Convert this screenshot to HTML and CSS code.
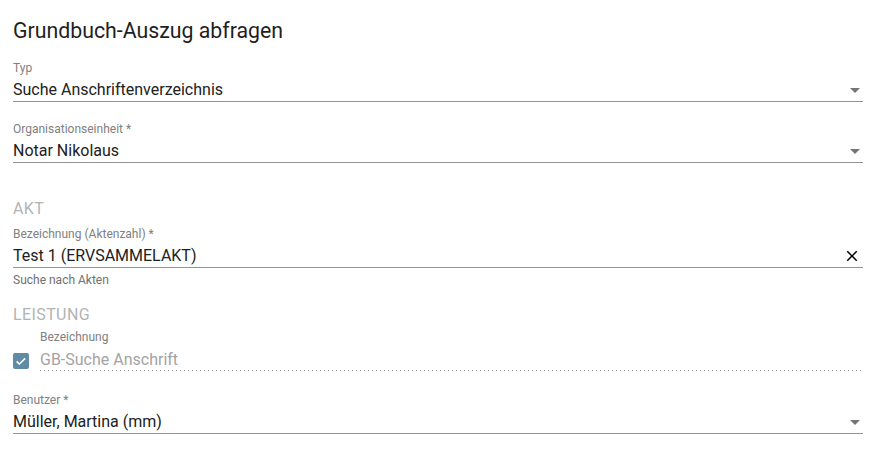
FILE: index.html
```html
<!DOCTYPE html>
<html lang="de">
<head>
<meta charset="utf-8">
<title>Grundbuch-Auszug abfragen</title>
<link rel="stylesheet" href="styles.css">
</head>
<body>
<div class="page">
  <h1 class="title">Grundbuch-Auszug abfragen</h1>

  <div class="field field-first">
    <div class="label">Typ</div>
    <div class="control">
      <span class="value">Suche Anschriftenverzeichnis</span>
      <span class="arrow"></span>
    </div>
  </div>

  <div class="field">
    <div class="label">Organisationseinheit *</div>
    <div class="control">
      <span class="value">Notar Nikolaus</span>
      <span class="arrow"></span>
    </div>
  </div>

  <div class="section section-akt">AKT</div>

  <div class="field field-akt">
    <div class="label">Bezeichnung (Aktenzahl) *</div>
    <div class="control">
      <span class="value">Test 1 (ERVSAMMELAKT)</span>
      <svg class="clear" viewBox="0 0 24 24" width="18" height="18"><path d="M19 6.41L17.59 5 12 10.59 6.41 5 5 6.41 10.59 12 5 17.59 6.41 19 12 13.41 17.59 19 19 17.59 13.41 12z" fill="#000"/></svg>
    </div>
  </div>
  <div class="hint">Suche nach Akten</div>

  <div class="section section-leistung">LEISTUNG</div>

  <div class="leistung-row">
    <span class="checkbox">
      <svg viewBox="0 0 16 16" width="16" height="16"><path d="M3.6 8.3 L6.4 11 L12.2 5.4" fill="none" stroke="#fff" stroke-width="1.6"/></svg>
    </span>
    <div class="leistung-col">
      <div class="label">Bezeichnung</div>
      <div class="disabled-value">GB-Suche Anschrift</div>
    </div>
  </div>

  <div class="field field-user">
    <div class="label">Benutzer *</div>
    <div class="control">
      <span class="value">Müller, Martina (mm)</span>
      <span class="arrow"></span>
    </div>
  </div>
</div>
</body>
</html>
```

FILE: styles.css
```css
html, body {
  margin: 0;
  padding: 0;
  background: #ffffff;
}

body {
  font-family: Roboto, "Liberation Sans", Arial, sans-serif;
  color: #212121;
}

.page {
  padding: 0 18px 0 13px;
}

.title {
  margin: 19px 0 0;
  font-size: 21.3px;
  line-height: 24px;
  font-weight: 400;
  color: #1f1f1f;
}

.field {
  margin-top: 19px;
}

.field-first {
  margin-top: 17px;
}

.field-akt {
  margin-top: 5px;
}

.field-user {
  margin-top: 21px;
}

.label {
  font-size: 12px;
  line-height: 16px;
  color: #808080;
}

.control {
  display: flex;
  align-items: center;
  height: 20px;
  padding-top: 4px;
  padding-bottom: 1px;
  border-bottom: 1px solid #949494;
}

.value {
  flex: 1;
  font-size: 16px;
  line-height: 20px;
  color: #212121;
  white-space: nowrap;
}

.arrow {
  width: 0;
  height: 0;
  border-left: 5px solid transparent;
  border-right: 5px solid transparent;
  border-top: 5px solid #757575;
  margin-right: 3px;
  margin-top: 1px;
}

.clear {
  display: block;
  margin-right: 2px;
}

.hint {
  margin-top: 4px;
  font-size: 12px;
  line-height: 16px;
  color: #707070;
}

.section {
  font-size: 16px;
  line-height: 24px;
  color: #b3b3b3;
  letter-spacing: 0.4px;
}

.section-akt {
  margin-top: 34px;
}

.section-leistung {
  margin-top: 15px;
}

.leistung-row {
  display: flex;
  align-items: flex-end;
  margin-top: 2px;
}

.checkbox {
  display: block;
  width: 16px;
  height: 16px;
  border-radius: 2px;
  background: #5f8ba5;
  margin-right: 11px;
  margin-bottom: 2px;
  flex: none;
}

.checkbox svg {
  display: block;
}

.leistung-col {
  flex: 1;
  margin-right: 1px;
}

.disabled-value {
  margin-top: 4px;
  font-size: 16px;
  line-height: 21px;
  color: #a3a3a3;
  padding-bottom: 1px;
  background-image: linear-gradient(to right, rgba(0, 0, 0, 0.42) 0, rgba(0, 0, 0, 0.42) 1px, transparent 1px);
  background-size: 4px 1px;
  background-repeat: repeat-x;
  background-position: 0 bottom;
}
```
